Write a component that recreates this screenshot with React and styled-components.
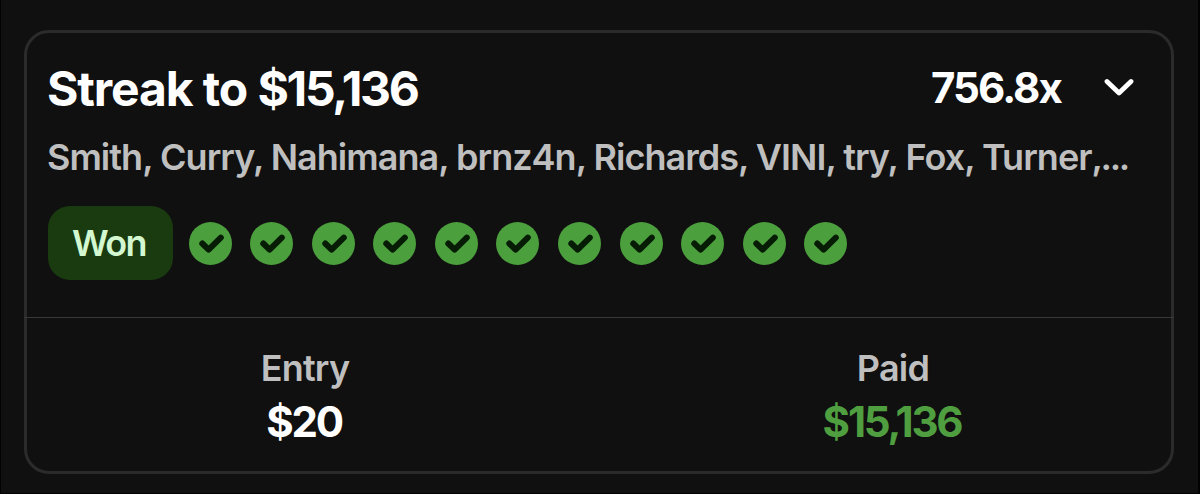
import React from 'react';
import styled, { createGlobalStyle } from 'styled-components';

const GlobalStyle = createGlobalStyle`
  * {
    box-sizing: border-box;
  }

  body {
    margin: 0;
    background: #101010;
    font-family: Inter, 'Liberation Sans', sans-serif;
    -webkit-font-smoothing: antialiased;
  }
`;

const Page = styled.main`
  width: 1200px;
  height: 494px;
  padding: 30px 24px 19px 23px;
  border: solid #020202;
  border-width: 0 2px 1px 1px;
  overflow: hidden;
`;

const Card = styled.article`
  height: 444px;
  border: 3px solid #2b2b2b;
  border-radius: 25px;
  display: flex;
  flex-direction: column;
`;

const Summary = styled.section`
  height: 284px;
  padding: 27px 21px 0 20px;
`;

const Header = styled.header`
  display: flex;
  align-items: center;
  height: 56px;
`;

const Title = styled.h1`
  flex: 1;
  margin: 0;
  font-size: 48px;
  line-height: 57px;
  font-weight: 700;
  letter-spacing: -1.1px;
  color: #fff;
  white-space: nowrap;
`;

const Amount = styled.span`
  letter-spacing: -2.3px;
`;

const Multiplier = styled.span`
  font-size: 42px;
  line-height: 56px;
  font-weight: 700;
  letter-spacing: -1.9px;
  color: #fff;
`;

const ToggleButton = styled.button`
  display: flex;
  margin: 0 16px 0 43px;
  padding: 0;
  border: none;
  background: none;
  color: #fff;
  cursor: pointer;
`;

const Players = styled.p`
  margin: 19px 0 0;
  font-size: 36px;
  line-height: 44px;
  font-weight: 640;
  letter-spacing: -0.98px;
  color: #bfbfbf;
  white-space: nowrap;
`;

const Ellipsis = styled.span`
  letter-spacing: -2.4px;
`;

const Results = styled.div`
  display: flex;
  align-items: center;
  margin-top: 27px;
  height: 74px;
`;

const Badge = styled.span`
  width: 125px;
  height: 74px;
  margin: 0 15.5px 0 1px;
  padding-right: 3px;
  border-radius: 22px;
  background: #193b0f;
  color: #d3f7d0;
  font-size: 36px;
  line-height: 75px;
  font-weight: 640;
  letter-spacing: -1.6px;
  text-align: center;
`;

const Picks = styled.div`
  display: flex;
  gap: 18.6px;
`;

const Totals = styled.section`
  display: grid;
  grid-template-columns: 1fr 1fr;
  column-gap: 32px;
  flex: 1;
  margin: 0 -3px;
  padding: 28px 3px 0;
  border-top: 1px solid #383838;
`;

const Total = styled.div`
  text-align: center;
`;

const TotalLabel = styled.div`
  font-size: 36px;
  line-height: 44px;
  font-weight: 640;
  letter-spacing: -0.8px;
  color: #bfbfbf;
`;

const TotalValue = styled.div`
  margin-top: 6px;
  padding-right: 2px;
  font-size: 42px;
  line-height: 52px;
  font-weight: 700;
  letter-spacing: -2.2px;
  color: ${props => props.$paid ? '#4f9f40' : '#fff'};
`;

const picks = ['Smith', 'Curry', 'Nahimana', 'brnz4n', 'Richards', 'VINI', 'try', 'Fox', 'Turner'];
const wonCount = 11;

const CheckIcon = () => (
  <svg width="43" height="43" viewBox="0 0 43 43" fill="none">
    <circle cx="21.5" cy="21.5" r="21.5" fill="#4b9f3d" />
    <path
      d="M13.3 21.5L19.6 27.6L31.8 15.6"
      stroke="#061c05"
      strokeWidth="6"
      strokeLinecap="round"
      strokeLinejoin="round"
    />
  </svg>
);

const ChevronIcon = () => (
  <svg width="30" height="20" viewBox="0 0 30 20" fill="none">
    <path
      d="M3 3.5L15 15L27 3.5"
      stroke="currentColor"
      strokeWidth="4.8"
      strokeLinecap="round"
      strokeLinejoin="round"
    />
  </svg>
);

const App = () => (
  <>
    <GlobalStyle />
    <Page>
      <Card>
        <Summary>
          <Header>
            <Title>Streak to <Amount>$15,136</Amount></Title>
            <Multiplier>756.8x</Multiplier>
            <ToggleButton>
              <ChevronIcon />
            </ToggleButton>
          </Header>
          <Players>{picks.join(', ')}<Ellipsis>,...</Ellipsis></Players>
          <Results>
            <Badge>Won</Badge>
            <Picks>
              {Array.from({ length: wonCount }, (_, i) => (
                <CheckIcon key={i} />
              ))}
            </Picks>
          </Results>
        </Summary>
        <Totals>
          <Total>
            <TotalLabel>Entry</TotalLabel>
            <TotalValue>$20</TotalValue>
          </Total>
          <Total>
            <TotalLabel>Paid</TotalLabel>
            <TotalValue $paid>$15,136</TotalValue>
          </Total>
        </Totals>
      </Card>
    </Page>
  </>
);

export default App;
